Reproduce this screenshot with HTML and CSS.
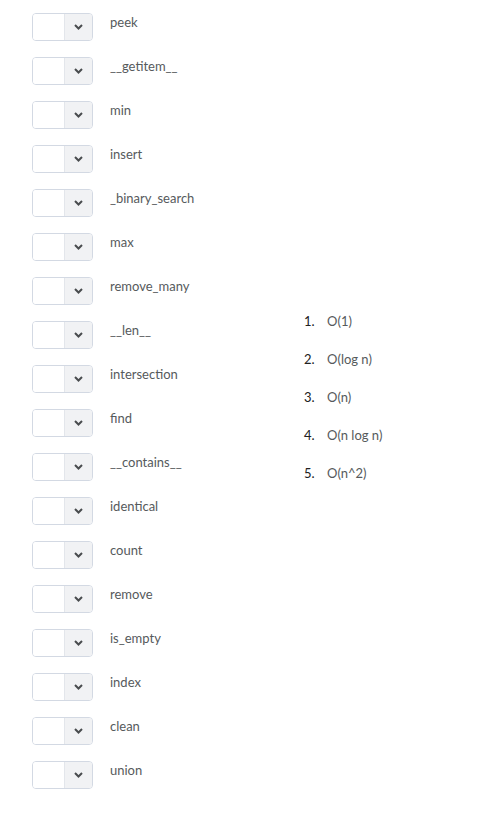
FILE: index.html
```html
<!DOCTYPE html>
<html lang="en">
<head>
    <meta charset="UTF-8">
    <title>Matching</title>
    <link rel="stylesheet" href="styles.css">
</head>
<body>
    <div class="question">
        <div class="choices">
            <div class="row"><div class="select"><span class="value"></span><span class="arrow"><svg width="9" height="6" viewBox="0 0 9 6"><path d="M1 1l3.5 3.5L8 1" fill="none" stroke="#494c4e" stroke-width="2"/></svg></span></div><span class="label">peek</span></div>
            <div class="row"><div class="select"><span class="value"></span><span class="arrow"><svg width="9" height="6" viewBox="0 0 9 6"><path d="M1 1l3.5 3.5L8 1" fill="none" stroke="#494c4e" stroke-width="2"/></svg></span></div><span class="label">__getitem__</span></div>
            <div class="row"><div class="select"><span class="value"></span><span class="arrow"><svg width="9" height="6" viewBox="0 0 9 6"><path d="M1 1l3.5 3.5L8 1" fill="none" stroke="#494c4e" stroke-width="2"/></svg></span></div><span class="label">min</span></div>
            <div class="row"><div class="select"><span class="value"></span><span class="arrow"><svg width="9" height="6" viewBox="0 0 9 6"><path d="M1 1l3.5 3.5L8 1" fill="none" stroke="#494c4e" stroke-width="2"/></svg></span></div><span class="label">insert</span></div>
            <div class="row"><div class="select"><span class="value"></span><span class="arrow"><svg width="9" height="6" viewBox="0 0 9 6"><path d="M1 1l3.5 3.5L8 1" fill="none" stroke="#494c4e" stroke-width="2"/></svg></span></div><span class="label">_binary_search</span></div>
            <div class="row"><div class="select"><span class="value"></span><span class="arrow"><svg width="9" height="6" viewBox="0 0 9 6"><path d="M1 1l3.5 3.5L8 1" fill="none" stroke="#494c4e" stroke-width="2"/></svg></span></div><span class="label">max</span></div>
            <div class="row"><div class="select"><span class="value"></span><span class="arrow"><svg width="9" height="6" viewBox="0 0 9 6"><path d="M1 1l3.5 3.5L8 1" fill="none" stroke="#494c4e" stroke-width="2"/></svg></span></div><span class="label">remove_many</span></div>
            <div class="row"><div class="select"><span class="value"></span><span class="arrow"><svg width="9" height="6" viewBox="0 0 9 6"><path d="M1 1l3.5 3.5L8 1" fill="none" stroke="#494c4e" stroke-width="2"/></svg></span></div><span class="label">__len__</span></div>
            <div class="row"><div class="select"><span class="value"></span><span class="arrow"><svg width="9" height="6" viewBox="0 0 9 6"><path d="M1 1l3.5 3.5L8 1" fill="none" stroke="#494c4e" stroke-width="2"/></svg></span></div><span class="label">intersection</span></div>
            <div class="row"><div class="select"><span class="value"></span><span class="arrow"><svg width="9" height="6" viewBox="0 0 9 6"><path d="M1 1l3.5 3.5L8 1" fill="none" stroke="#494c4e" stroke-width="2"/></svg></span></div><span class="label">find</span></div>
            <div class="row"><div class="select"><span class="value"></span><span class="arrow"><svg width="9" height="6" viewBox="0 0 9 6"><path d="M1 1l3.5 3.5L8 1" fill="none" stroke="#494c4e" stroke-width="2"/></svg></span></div><span class="label">__contains__</span></div>
            <div class="row"><div class="select"><span class="value"></span><span class="arrow"><svg width="9" height="6" viewBox="0 0 9 6"><path d="M1 1l3.5 3.5L8 1" fill="none" stroke="#494c4e" stroke-width="2"/></svg></span></div><span class="label">identical</span></div>
            <div class="row"><div class="select"><span class="value"></span><span class="arrow"><svg width="9" height="6" viewBox="0 0 9 6"><path d="M1 1l3.5 3.5L8 1" fill="none" stroke="#494c4e" stroke-width="2"/></svg></span></div><span class="label">count</span></div>
            <div class="row"><div class="select"><span class="value"></span><span class="arrow"><svg width="9" height="6" viewBox="0 0 9 6"><path d="M1 1l3.5 3.5L8 1" fill="none" stroke="#494c4e" stroke-width="2"/></svg></span></div><span class="label">remove</span></div>
            <div class="row"><div class="select"><span class="value"></span><span class="arrow"><svg width="9" height="6" viewBox="0 0 9 6"><path d="M1 1l3.5 3.5L8 1" fill="none" stroke="#494c4e" stroke-width="2"/></svg></span></div><span class="label">is_empty</span></div>
            <div class="row"><div class="select"><span class="value"></span><span class="arrow"><svg width="9" height="6" viewBox="0 0 9 6"><path d="M1 1l3.5 3.5L8 1" fill="none" stroke="#494c4e" stroke-width="2"/></svg></span></div><span class="label">index</span></div>
            <div class="row"><div class="select"><span class="value"></span><span class="arrow"><svg width="9" height="6" viewBox="0 0 9 6"><path d="M1 1l3.5 3.5L8 1" fill="none" stroke="#494c4e" stroke-width="2"/></svg></span></div><span class="label">clean</span></div>
            <div class="row"><div class="select"><span class="value"></span><span class="arrow"><svg width="9" height="6" viewBox="0 0 9 6"><path d="M1 1l3.5 3.5L8 1" fill="none" stroke="#494c4e" stroke-width="2"/></svg></span></div><span class="label">union</span></div>
        </div>
        <ol class="answers">
            <li>O(1)</li>
            <li>O(log n)</li>
            <li>O(n)</li>
            <li>O(n log n)</li>
            <li>O(n^2)</li>
        </ol>
    </div>
</body>
</html>
```

FILE: styles.css
```css
body {
    margin: 0;
    background: #fff;
    font-family: Lato, "Open Sans", sans-serif;
    font-size: 13px;
    color: #565a5c;
}
.question {
    display: flex;
    align-items: center;
    padding: 13px 0 0 32px;
}
.choices {
    display: flex;
    flex-direction: column;
    gap: 16px;
    width: 272px;
}
.row {
    display: flex;
    align-items: flex-start;
    gap: 17px;
}
.select {
    display: flex;
    width: 59px;
    height: 26px;
    border: 1px solid #d3d9e3;
    border-radius: 4px;
    overflow: hidden;
    flex-shrink: 0;
}
.value {
    flex: 1;
    background: #fff;
    border-right: 1px solid #e3e6eb;
}
.arrow {
    width: 27px;
    background: #f1f2f4;
    display: flex;
    align-items: center;
    justify-content: center;
}
.label {
    line-height: 18px;
}
.answers {
    list-style: none;
    counter-reset: item;
    margin: 0 0 9px;
    padding: 0;
    display: flex;
    flex-direction: column;
    gap: 20px;
}
.answers li {
    counter-increment: item;
    line-height: 18px;
    display: flex;
}
.answers li::before {
    content: counter(item) ".";
    color: #202122;
    width: 23px;
}
```
